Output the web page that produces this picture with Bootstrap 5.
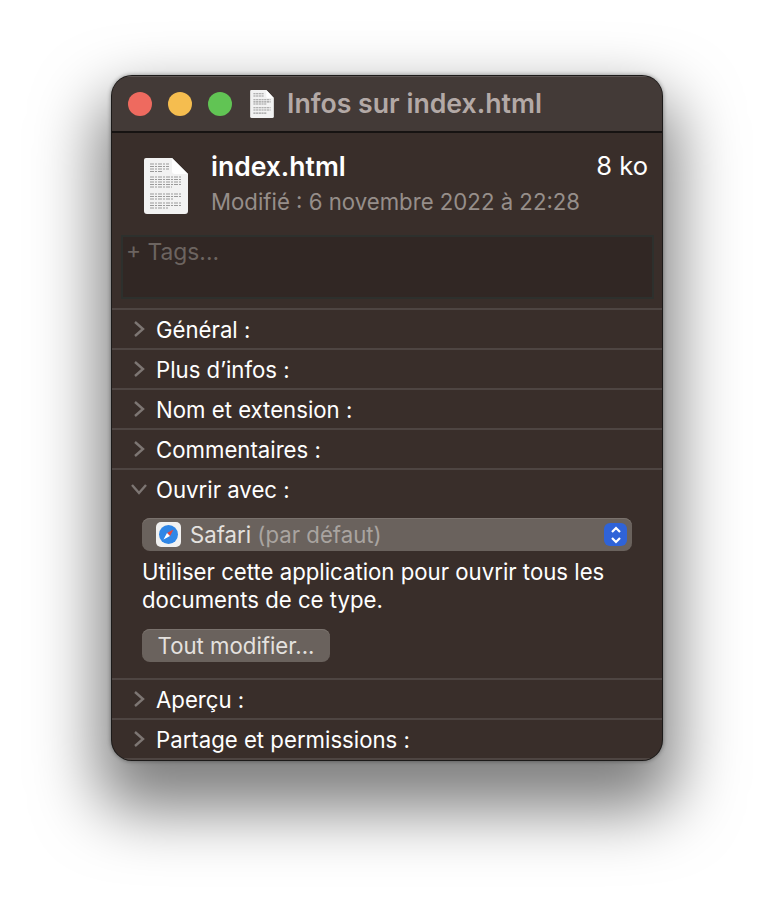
<!DOCTYPE html>
<html lang="fr">
<head>
    <meta charset="UTF-8">
    <meta name="viewport" content="width=device-width, initial-scale=1.0">
    <title>Infos sur index.html</title>
    <link href="https://cdn.jsdelivr.net/npm/bootstrap@5.3.2/dist/css/bootstrap.min.css" rel="stylesheet">
    <style>
        html, body { height: 100%; }
        body { background: #fff; font-family: Inter, "Liberation Sans", sans-serif; color: #fff; overflow: hidden; padding: 76px 112px 0; }
        .info-win { width: 550px; height: 684px; border-radius: 20px; overflow: hidden; background: #392e2a; box-shadow: 0 0 0 1px #1c1a19, 0 0 4px 1px rgba(0,0,0,.4), 0 36px 64px 14px rgba(0,0,0,.5); }
        .title-bar { height: 57px; background: #433a37; border-bottom: 2px solid #161312; padding-left: 16px; gap: 16px; box-shadow: inset 0 1px 0 #5e5654; }
        .light { width: 24px; height: 24px; border-radius: 50%; }
        .title-icon { margin-left: 2px; }
        .title-text { font-size: 26.7px; font-weight: 600; color: #b3a9a6; margin-left: -3px; }
        .head-row { height: 102px; padding: 0 14px 0 32px; }
        .file-name { font-size: 26.5px; font-weight: 600; line-height: 30px; }
        .file-date { font-size: 22.2px; line-height: 28px; color: #968e8a; margin-top: 7px; }
        .file-size { font-size: 25.5px; line-height: 30px; }
        .head-text { padding-top: 18px; }
        .tags-box { height: 64px; margin: 0 8px 0 9px; background: #312724; border: 2px solid #2d302d; color: #6c6460; font-size: 22.8px; line-height: 30px; padding-left: 3px; }
        .sect { border-top: 2px solid #4e4542; height: 40px; padding-left: 20px; padding-top: 2px; font-size: 22.2px; }
        .sect-first { margin-top: 9px; }
        .sect-last { height: 42px; border-bottom: 2px solid #4e4542; }
        .sect svg { margin-right: 10px; margin-bottom: 3px; }
        .open-body { height: 170px; padding: 0 30px; }
        .app-select { height: 33px; background: #6a625d; border-radius: 8px; padding: 0 5px 0 14px; font-size: 22.2px; color: #e4e1df; margin-top: 10px; box-shadow: inset 0 1px 0 #7a726d; }
        .app-select > svg { margin-right: 9px; }
        .app-select small { font-size: inherit; color: #a9a4a0; }
        .stepper { width: 23px; height: 23px; border-radius: 6px; background: #2f63d8; }
        .open-note { font-size: 22.2px; line-height: 28px; margin-top: 7px; color: #fff; white-space: nowrap; }
        .modify-btn { height: 33px; width: 188px; background: #6a625d; border: 0; border-radius: 8px; color: #e4e1df; font-size: 22.2px; margin-top: 15px; padding: 0; box-shadow: inset 0 1px 0 #7a726d; }
        .doc-lines { stroke: #9a9a9a; }
    </style>
</head>
<body>
    <div class="info-win d-flex flex-column">
        <div class="title-bar d-flex align-items-center">
            <span class="light" style="background:#ee6a5f"></span>
            <span class="light" style="background:#f5bd4f"></span>
            <span class="light" style="background:#61c454"></span>
            <svg class="title-icon" width="24" height="28" viewBox="0 0 44 52">
                <path d="M2 0H30L44 15V49a3 3 0 0 1-3 3H3a3 3 0 0 1-3-3V2a2 2 0 0 1 2-2Z" fill="#f2f2f2"/>
                <path d="M30 0L44 15H33a3 3 0 0 1-3-3Z" fill="#fff"/>
                <path class="doc-lines" stroke-width="2" stroke-dasharray="4 1" d="M6 7H26M6 11H26M6 18H38M6 22H38M6 26H30M6 33H38M6 37H38M6 43H30"/>
            </svg>
            <span class="title-text">Infos sur index.html</span>
        </div>
        <div class="head-row d-flex">
            <svg width="44" height="56" viewBox="0 0 44 56" class="flex-shrink-0" style="margin-top:25px">
                <path d="M2 0H28L44 16V53a3 3 0 0 1-3 3H3a3 3 0 0 1-3-3V2a2 2 0 0 1 2-2Z" fill="#f2f2f2"/>
                <path d="M28 0L44 16H31a3 3 0 0 1-3-3Z" fill="#fff"/>
                <path class="doc-lines" stroke-width="1" stroke-dasharray="4 1 2 1" d="M6 6H25M6 8.5H25M6 11H25M6 13.5H18M6 19H38M6 21.500H38M6 24H38M6 26.500H38M6 29H28M6 36H38M6 38.500H38M6 41H30M6 45H38M6 47.500H38M6 50H24"/>
            </svg>
            <div class="head-text flex-grow-1 d-flex justify-content-between" style="margin-left:23px">
                <div>
                    <div class="file-name">index.html</div>
                    <div class="file-date">Modifié : 6 novembre 2022 à 22:28</div>
                </div>
                <div class="file-size">8 ko</div>
            </div>
        </div>
        <div class="tags-box">+ Tags...</div>
        <div class="sect sect-first d-flex align-items-center">
            <svg width="14" height="18" viewBox="0 0 14 18"><path d="M3 2l8 7-8 7" fill="none" stroke="#7d7673" stroke-width="2.4"/></svg>
            <span>Général :</span>
        </div>
        <div class="sect d-flex align-items-center">
            <svg width="14" height="18" viewBox="0 0 14 18"><path d="M3 2l8 7-8 7" fill="none" stroke="#7d7673" stroke-width="2.4"/></svg>
            <span>Plus d’infos :</span>
        </div>
        <div class="sect d-flex align-items-center">
            <svg width="14" height="18" viewBox="0 0 14 18"><path d="M3 2l8 7-8 7" fill="none" stroke="#7d7673" stroke-width="2.4"/></svg>
            <span>Nom et extension :</span>
        </div>
        <div class="sect d-flex align-items-center">
            <svg width="14" height="18" viewBox="0 0 14 18"><path d="M3 2l8 7-8 7" fill="none" stroke="#7d7673" stroke-width="2.4"/></svg>
            <span>Commentaires :</span>
        </div>
        <div class="sect d-flex align-items-center">
            <svg width="18" height="14" viewBox="0 0 18 14" style="margin-left:-2px;margin-right:8px"><path d="M2 3l7 8 7-8" fill="none" stroke="#7d7673" stroke-width="2.4"/></svg>
            <span>Ouvrir avec :</span>
        </div>
        <div class="open-body">
            <div class="app-select d-flex align-items-center">
                <svg width="25" height="25" viewBox="0 0 25 25">
                    <rect width="25" height="25" rx="5" fill="#f1f1f1"/>
                    <circle cx="12.5" cy="12.5" r="9.500" fill="#2f86e6"/>
                    <path d="M17.500 7.500l-6.500 3.500 3 3Z" fill="#e8473c"/>
                    <path d="M7.500 17.500l3.500-6.500 3 3Z" fill="#fff"/>
                </svg>
                <span>Safari <small>(par défaut)</small></span>
                <span class="stepper ms-auto d-flex align-items-center justify-content-center">
                    <svg width="14" height="20" viewBox="0 0 14 20"><path d="M3 7l4-4 4 4M3 13l4 4 4-4" fill="none" stroke="#fff" stroke-width="2.2"/></svg>
                </span>
            </div>
            <div class="open-note">Utiliser cette application pour ouvrir tous les<br>documents de ce type.</div>
            <button type="button" class="btn modify-btn d-block">Tout modifier...</button>
        </div>
        <div class="sect d-flex align-items-center">
            <svg width="14" height="18" viewBox="0 0 14 18"><path d="M3 2l8 7-8 7" fill="none" stroke="#7d7673" stroke-width="2.4"/></svg>
            <span>Aperçu :</span>
        </div>
        <div class="sect sect-last d-flex align-items-center">
            <svg width="14" height="18" viewBox="0 0 14 18"><path d="M3 2l8 7-8 7" fill="none" stroke="#7d7673" stroke-width="2.4"/></svg>
            <span>Partage et permissions :</span>
        </div>
    </div>
</body>
</html>
